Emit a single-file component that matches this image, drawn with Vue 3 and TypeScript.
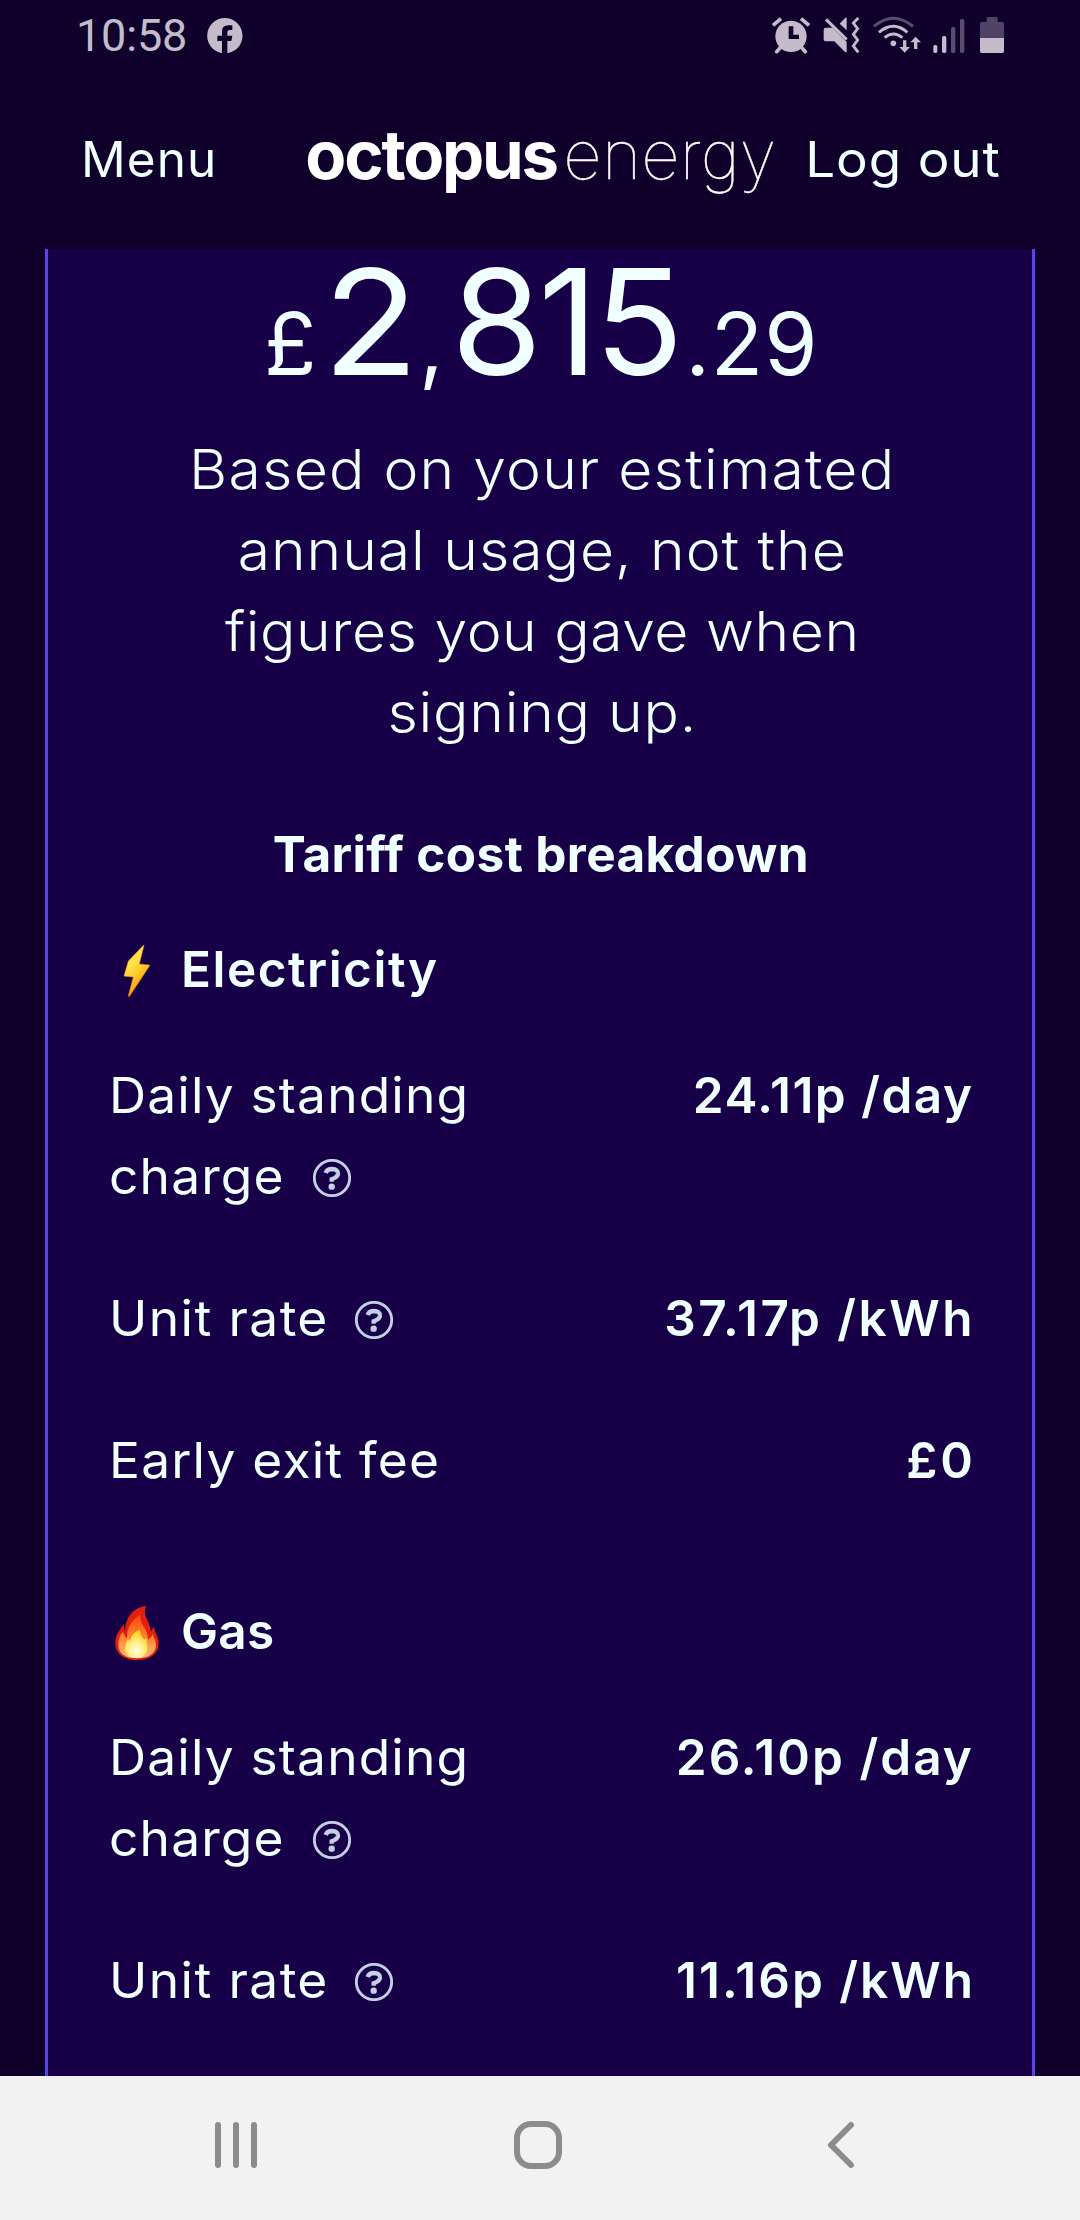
<script setup lang="ts">
interface Rate {
  lines: string[]
  help: boolean
  value: string
  labelSpacing: number
  valueSpacing: number
  valueOffset: number
}

interface Fuel {
  name: string
  icon: 'bolt' | 'flame'
  spacing: number
  rates: Rate[]
}

const note = [
  { text: 'Based on your estimated', spacing: 1.15 },
  { text: 'annual usage, not the', spacing: 0.9 },
  { text: 'figures you gave when', spacing: 0.5 },
  { text: 'signing up.', spacing: 0.7 },
]

const fuels: Fuel[] = [
  {
    name: 'Electricity',
    icon: 'bolt',
    spacing: 1.5,
    rates: [
      { lines: ['Daily standing', 'charge'], help: true, value: '24.11p /day', labelSpacing: 1.1, valueSpacing: 1.48, valueOffset: -1.5 },
      { lines: ['Unit rate'], help: true, value: '37.17p /kWh', labelSpacing: 1.35, valueSpacing: 2.5, valueOffset: -3 },
      { lines: ['Early exit fee'], help: false, value: '£0', labelSpacing: 1.15, valueSpacing: 3, valueOffset: -4 },
    ],
  },
  {
    name: 'Gas',
    icon: 'flame',
    spacing: 0.25,
    rates: [
      { lines: ['Daily standing', 'charge'], help: true, value: '26.10p /day', labelSpacing: 1.1, valueSpacing: 2.05, valueOffset: -2 },
      { lines: ['Unit rate'], help: true, value: '11.16p /kWh', labelSpacing: 1.35, valueSpacing: 2, valueOffset: -3 },
    ],
  },
]
</script>

<template>
  <div class="screen">
    <div class="status">
      <span class="clock">10:58</span>
      <svg class="fb" viewBox="500 53 107 107">
        <circle cx="553.500" cy="106" r="53" fill="#c3bccb" />
        <path d="M545 162V122H531V106H545V94Q545 75 564 75H576V89H568Q561 89 561 96V106H576L573 122H561V162Z" fill="#10002c" />
      </svg>
      <div class="tray">
        <svg width="38" height="38" viewBox="96 48 114 114">
          <g stroke="#c3bccb" stroke-width="11">
            <path d="M99 76L123 56M183 56L207 76" />
            <path d="M122 142L110 155M184 142L196 155" stroke-linecap="round" />
          </g>
          <circle cx="153" cy="109" r="47" fill="#c3bccb" />
          <path d="M146 79H160V104H177V117H146Z" fill="#10002c" />
        </svg>
        <svg class="mute" width="37" height="38" viewBox="250 48 111 114">
          <path d="M258 83H278L321 126V153Q321 158 316 156L284 124H258Q252 124 252 118V89Q252 83 258 83Z" fill="#c3bccb" />
          <path d="M259 58L321 119" stroke="#c3bccb" stroke-width="9" />
          <path d="M300 71L317 53Q321 51 321 55V91Z" fill="#c3bccb" />
          <path d="M356 54L341 69L354 86L341 103L354 120L341 138L356 157" fill="none" stroke="#c3bccb" stroke-width="8.500" />
        </svg>
        <svg class="wifi" width="48" height="38" viewBox="399 48 144 114">
          <g fill="none" stroke="#c3bccb" stroke-width="8.500">
            <path d="M402 79Q460 30 519 79" stroke="#5a4c70" />
            <path d="M417 97Q460 61 502 97" />
            <path d="M434 113Q460 91 487 113" />
          </g>
          <circle cx="460" cy="130" r="8.500" fill="#c3bccb" />
          <path d="M489 121H499V141H510L494 158L478 141H489Z M522 147H532V127H543L527 110L511 127H522Z" fill="#c3bccb" />
        </svg>
        <svg class="signal" width="32" height="38" viewBox="580 48 96 114">
          <rect x="581" y="135" width="12" height="24" rx="5" fill="#c3bccb" />
          <rect x="607" y="108" width="13" height="51" rx="5" fill="#c3bccb" />
          <rect x="634" y="81" width="13" height="78" rx="5" fill="#5a4c70" />
          <rect x="661" y="57" width="13" height="102" rx="5" fill="#5a4c70" />
        </svg>
        <svg class="battery" width="24" height="38" viewBox="720 48 72 114">
          <path d="M720 114V71Q720 66 725 66H740V54Q740 51 743 51H770Q773 51 773 54V66H787Q792 66 792 71V114Z" fill="#504367" />
          <path d="M720 114H792V154Q792 159 787 159H725Q720 159 720 154Z" fill="#c3bccb" />
        </svg>
      </div>
    </div>

    <header class="header">
      <span class="menu">Menu</span>
      <span class="logo"><span class="octopus">octopus</span><span class="energy">energy</span></span>
      <span class="logout">Log out</span>
    </header>

    <main class="page">
      <section class="card">
        <div class="amount">
          <span class="small">£</span>
          <span class="large thousands">2</span>
          <span class="small comma">,</span>
          <span class="large hundreds">815</span>
          <span class="small pence">.29</span>
        </div>
        <p class="note">
          <span v-for="line in note" :key="line.text" :style="{ letterSpacing: line.spacing + 'px' }">{{ line.text }}</span>
        </p>
        <h2 class="title">Tariff cost breakdown</h2>

        <div v-for="fuel in fuels" :key="fuel.name" class="fuel">
          <h3 class="fuel-name">
            <svg v-if="fuel.icon === 'bolt'" width="56" height="58" viewBox="56 60 168 174">
              <defs>
                <linearGradient id="bolt" x1="0" y1="0" x2="0.500" y2="1">
                  <stop offset="0" stop-color="#ffc21a" />
                  <stop offset="0.400" stop-color="#ffe44a" />
                  <stop offset="0.650" stop-color="#ffc928" />
                  <stop offset="1" stop-color="#f58a0c" />
                </linearGradient>
              </defs>
              <path d="M160 75Q162 76 160 80L147 132L177 135Q179 136 177 139L118 228Q114 232 114 227L129 171L103 169Q100 168 102 164L114 123Z" fill="url(#bolt)" stroke="#e88a10" stroke-width="1.500" />
            </svg>
            <svg v-else width="56" height="58" viewBox="56 66 168 174">
              <defs>
                <linearGradient id="flame" x1="0" y1="0" x2="0" y2="1">
                  <stop offset="0" stop-color="#ff4a08" />
                  <stop offset="0.500" stop-color="#ff8130" />
                  <stop offset="1" stop-color="#ffc080" />
                </linearGradient>
                <radialGradient id="core" cx="0.500" cy="0.750" r="0.650">
                  <stop offset="0" stop-color="#fffbe0" />
                  <stop offset="0.400" stop-color="#fff3a0" />
                  <stop offset="1" stop-color="#ffd51e" />
                </radialGradient>
              </defs>
              <path d="M167 78C160 99 166 110 175 129Q180 142 182 155Q184 146 192 142C191 160 205 167 205 190C205 222 181 240 139 240C97 240 75 218 75 188C75 164 88 151 101 132Q100 145 105 156C103 116 128 82 167 78Z" fill="#e3200c" />
              <path d="M150 104C148 124 158 135 167 151Q173 166 173 179Q184 172 188 161C189 175 198 181 197 196C195 222 174 235 139 235C104 235 84 220 84 192C84 177 89 165 98 155Q101 168 110 175C109 145 123 120 150 104Z" fill="url(#flame)" />
              <path d="M149 149C149 163 154 170 162 179L168 174C168 189 173 195 171 207C168 224 158 234 137 234C117 234 105 223 104 205C103 194 109 188 112 178L119 183C122 167 132 154 149 149Z" fill="url(#core)" />
            </svg>
            <span :style="{ letterSpacing: fuel.spacing + 'px' }">{{ fuel.name }}</span>
          </h3>
          <div v-for="rate in fuel.rates" :key="rate.value" class="rate">
            <div class="label" :style="{ letterSpacing: rate.labelSpacing + 'px' }">
              <div v-for="(line, i) in rate.lines" :key="line">
                <span class="wide">{{ line }}</span><svg v-if="rate.help && i === rate.lines.length - 1" class="help" viewBox="665 715 114 114">
                  <circle cx="722" cy="772" r="53" fill="none" stroke="#c3d0e3" stroke-width="8.500" />
                  <path d="M703 757Q707 745 722 745Q741 746 740 760Q739 769 721 776V783" fill="none" stroke="#c3d0e3" stroke-width="13" />
                  <circle cx="721" cy="798" r="9.500" fill="#c3d0e3" />
                </svg>
              </div>
            </div>
            <div class="value" :style="{ letterSpacing: rate.valueSpacing + 'px', marginRight: rate.valueOffset + 'px' }">{{ rate.value }}</div>
          </div>
        </div>
      </section>
    </main>

    <nav class="nav">
      <svg viewBox="0 0 60 60"><path d="M12 10V50M30 10V50M48 10V50" fill="none" stroke="#8c8c8c" stroke-width="6" stroke-linecap="round" /></svg>
      <svg viewBox="0 0 60 60"><rect x="9" y="9" width="42" height="42" rx="14" fill="none" stroke="#8c8c8c" stroke-width="6" /></svg>
      <svg viewBox="0 0 60 60"><path d="M41 10L21 30L41 50" fill="none" stroke="#8c8c8c" stroke-width="6" stroke-linecap="round" stroke-linejoin="round" /></svg>
    </nav>
  </div>
</template>

<style>
body {
  margin: 0;
  background: #10002c;
}
</style>

<style scoped>
.screen {
  width: 1080px;
  height: 2220px;
  display: flex;
  flex-direction: column;
  overflow: hidden;
  background: #10002c;
  color: #f0ffff;
  font-family: Inter, "Liberation Sans", sans-serif;
  font-size: 49.5px;
  line-height: 81px;
}
.screen svg {
  flex: none;
}
.status {
  height: 72px;
  flex: none;
  box-sizing: border-box;
  display: flex;
  align-items: flex-start;
  padding: 0 76px;
  color: #c3bccb;
}
.clock {
  font: 400 45px/72px Roboto, sans-serif;
  letter-spacing: -0.2px;
  width: 131px;
}
.fb {
  width: 35.7px;
  height: 35.7px;
  margin-top: 17.7px;
}
.tray {
  display: flex;
  margin: 16px 0 0 auto;
}
.mute,
.wifi {
  margin-left: 13px;
}
.signal {
  margin-left: 12.3px;
}
.battery {
  margin-left: 14.7px;
}
.header {
  height: 177px;
  flex: none;
  box-sizing: border-box;
  display: flex;
  align-items: baseline;
  padding: 33px 79px 0 81px;
  white-space: nowrap;
}
.menu {
  letter-spacing: 1.06px;
}
.logo {
  display: flex;
  align-items: baseline;
  margin-left: 88px;
  font-size: 67px;
  line-height: 96px;
  color: #fff;
  transform: translateY(2px);
}
.octopus {
  font-weight: 700;
  letter-spacing: -2.2px;
  width: 258px;
}
.energy {
  font-weight: 100;
  letter-spacing: 0.2px;
  -webkit-text-stroke: 0.4px #fff;
}
.logout {
  margin-left: auto;
  letter-spacing: 0.8px;
  transform: scaleX(1.07);
  transform-origin: right;
}
.page {
  flex: 1;
  min-height: 0;
  padding: 0 45px;
}
.card {
  box-sizing: border-box;
  height: 100%;
  border: solid #5842ea;
  border-width: 0 3px;
  background: #180048;
  padding: 22.6px 60px 40px 60.5px;
}
.amount {
  display: flex;
  align-items: baseline;
  height: 100px;
  line-height: 100px;
  padding-left: 155.5px;
}
.small {
  font-size: 86px;
}
.large {
  font-size: 147px;
}
.thousands {
  margin-left: 9.5px;
  transform: scaleX(1.07);
}
.comma {
  margin-left: 3.4px;
}
.hundreds {
  margin-left: 7.3px;
  letter-spacing: -3.87px;
}
.pence {
  margin-left: 5.5px;
  letter-spacing: 0.9px;
}
.note {
  margin: 57px 0 61px;
  padding-left: 3px;
  text-align: center;
  font-size: 55px;
  font-weight: 300;
}
.note span {
  display: block;
  white-space: nowrap;
  transform: scaleX(1.07);
}
.title {
  margin: 0 0 34px;
  padding-left: 1px;
  text-align: center;
  font-size: 49.5px;
  font-weight: 700;
  letter-spacing: 0.37px;
}
.fuel + .fuel {
  margin-top: 90px;
}
.fuel-name {
  display: flex;
  align-items: center;
  gap: 16.5px;
  height: 81px;
  margin: 0 0 45px;
  font-size: 49.5px;
  font-weight: 600;
}
.rate {
  display: flex;
  justify-content: space-between;
  white-space: nowrap;
}
.rate + .rate {
  margin-top: 61px;
}
.wide {
  display: inline-block;
  transform: scaleX(1.04);
  transform-origin: left;
}
.value {
  font-weight: 600;
}
.help {
  width: 38px;
  height: 38px;
  margin-left: 35.5px;
  vertical-align: -3px;
}
.nav {
  height: 144px;
  flex: none;
  box-sizing: border-box;
  display: flex;
  align-items: center;
  padding: 0 0 6px 85px;
  background: #f2f2f2;
}
.nav svg {
  width: 60px;
  height: 60px;
  margin: 0 121px;
}
</style>
